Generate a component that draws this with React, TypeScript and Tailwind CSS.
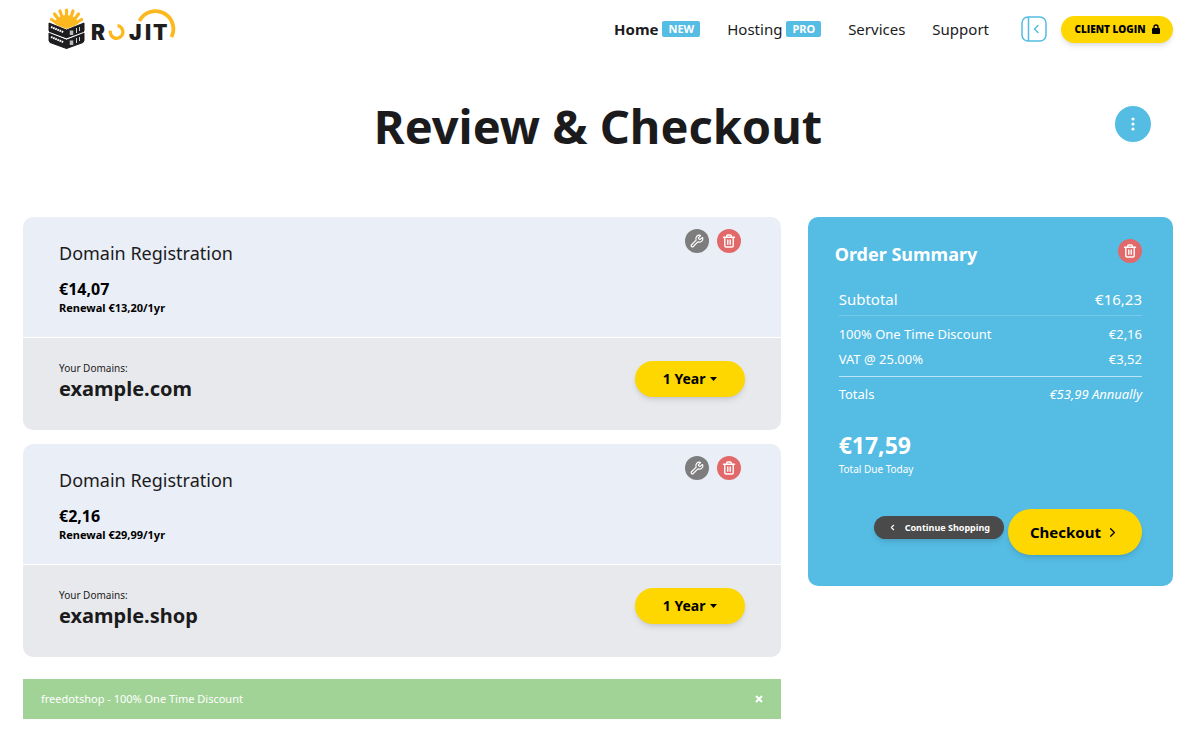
import { useState } from 'react';
import { ChevronLeft, ChevronRight, Wrench } from 'lucide-react';

type CartItem = {
	id: number;
	title: string;
	price: string;
	renewal: string;
	domain: string;
};

const navLinks = [
	{ label: 'Home', badge: 'NEW', active: true },
	{ label: 'Hosting', badge: 'PRO' },
	{ label: 'Services' },
	{ label: 'Support' },
];

const cartItems: CartItem[] = [
	{ id: 1, title: 'Domain Registration', price: '€14,07', renewal: 'Renewal €13,20/1yr', domain: 'example.com' },
	{ id: 2, title: 'Domain Registration', price: '€2,16', renewal: 'Renewal €29,99/1yr', domain: 'example.shop' },
];

function Logo() {
	return (
		<svg width="130" height="44" viewBox="0 0 130 44" role="img" aria-label="Rojit">
			{/* sun rays */}
			<g stroke="#fcb81e" strokeWidth="3.2" strokeLinecap="round">
				<path d="M18.5 17V4" />
				<path d="M16 17L12 5" />
				<path d="M21 17L25 5" />
				<path d="M14 18L6.5 8" />
				<path d="M23 18L30.5 8" />
				<path d="M12 19L3.5 13.5" />
				<path d="M25 19L33.5 13.5" />
			</g>
			<path d="M7 18a11.5 9 0 0 1 23 0l-11.5 5z" fill="#fcb81e" />
			{/* stacked servers */}
			<g fill="#1d1d1f" stroke="#1d1d1f" strokeWidth="1" strokeLinejoin="round">
				<path d="M1 17l17.5 7v8L2 26.5l-1-2z" />
				<path d="M36 17l-17.5 7v8L35 26.5l1-2z" />
				<path d="M1 27l17.5 7v8.5L2 36.5l-1-2z" />
				<path d="M36 27l-17.5 7v8.5L35 36.5l1-2z" />
			</g>
			<path d="M1.5 26.5l17 6.5 17-6.5" fill="none" stroke="#fff" strokeWidth="1" />
			<g stroke="#fff" strokeWidth="2" strokeDasharray="1.7 0.6" fill="none">
				<path d="M3 21l12.5 5.2" />
				<path d="M3 31l12.5 5.2" />
			</g>
			<g stroke="#fff" fill="none">
				<path d="M23.5 24.5v4.5M23.5 34.5v4.5" strokeWidth="3.5" opacity="0.7" />
				<path d="M28.5 22v5M28.5 32v5M31.5 21v4M31.5 31v4" strokeWidth="0.8" />
			</g>
			{/* word mark */}
			<g fill="#1d1d1f" fontFamily="Inter, sans-serif" fontWeight="900" fontSize="21">
				<text x="43" y="34">R</text>
				<text x="81" y="34">J</text>
				<text x="97" y="34">I</text>
				<text x="105" y="34">T</text>
			</g>
			<path d="M69.5 19.6a6.4 6.4 0 1 1-7.2 5" fill="none" stroke="#fcb81e" strokeWidth="3.4" />
			<path d="M91.5 15a17.5 17.5 0 1 1 32 16" fill="none" stroke="#fcb81e" strokeWidth="3.8" />
		</svg>
	);
}

function TrashIcon() {
	return (
		<svg width="14" height="14" viewBox="0 0 14 14" fill="none" stroke="currentColor" strokeWidth="1.4" strokeLinecap="round" strokeLinejoin="round">
			<path d="M1.5 3.3h11" />
			<path d="M4.7 3.2V2a1 1 0 0 1 1-1h2.6a1 1 0 0 1 1 1v1.2" />
			<path d="M2.8 3.5v8.2a1.3 1.3 0 0 0 1.3 1.3h5.8a1.3 1.3 0 0 0 1.3-1.3V3.5" />
			<path d="M5.8 6v4.2M8.2 6v4.2" />
		</svg>
	);
}

function DeleteButton({ label }: { label: string }) {
	return (
		<button aria-label={label} className="flex size-6 items-center justify-center rounded-full bg-[#e2696a] text-white">
			<TrashIcon />
		</button>
	);
}

function Header() {
	return (
		<header className="flex items-center justify-between pr-[17px] pl-12">
			<a href="#" className="pt-1.5">
				<Logo />
			</a>
			<div className="flex items-center pt-2">
				<nav className="flex items-center gap-[27px]">
					{navLinks.map((link) => (
						<a key={link.label} href="#" className={`flex items-center gap-1 text-[15px] ${link.active ? 'font-bold' : ''}`}>
							{link.label}
							{link.badge && (
								<span className="rounded-xs bg-[#55bce4] px-1.5 text-[11px] leading-4 font-bold text-white">{link.badge}</span>
							)}
						</a>
					))}
				</nav>
				<button aria-label="Toggle sidebar" className="ml-8 text-[#55bce4]">
					<svg width="26" height="26" viewBox="0 0 26 26" fill="none" stroke="currentColor" strokeWidth="1.5" strokeLinecap="round" strokeLinejoin="round">
						<rect x="1" y="1" width="24" height="24" rx="6" />
						<path d="M7.5 1.5v23" />
						<path d="M17 9.5L13.5 13l3.5 3.5" />
					</svg>
				</button>
				<a href="#" className="ml-3.5 flex h-[27px] w-28 items-center justify-center gap-1.5 rounded-full bg-[#ffd700] font-['Open_Sans',sans-serif] text-[10px] font-extrabold text-black shadow-md">
					CLIENT LOGIN
					<svg width="8" height="10" viewBox="0 0 8 10">
						<rect y="4" width="8" height="6" rx="1" fill="currentColor" />
						<path d="M2 4.5V3a2 2 0 0 1 4 0v1.5" fill="none" stroke="currentColor" strokeWidth="1.4" />
					</svg>
				</a>
			</div>
		</header>
	);
}

function CartCard({ item }: { item: CartItem }) {
	return (
		<article className="overflow-hidden rounded-[10px]">
			<div className="flex justify-between border-b border-white bg-[#eaeef6] pt-6 pr-10 pb-[22px] pl-9">
				<div>
					<h2 className="text-lg leading-6">{item.title}</h2>
					<p className="mt-3 text-base leading-6 font-bold text-black">{item.price}</p>
					<p className="text-[11px] leading-[14px] font-bold text-black">{item.renewal}</p>
				</div>
				<div className="-mt-3 flex gap-2">
					<button aria-label="Configure" className="flex size-6 items-center justify-center rounded-full bg-[#7d7d7d] text-white">
						<Wrench size={14} />
					</button>
					<DeleteButton label={`Remove ${item.domain}`} />
				</div>
			</div>
			<div className="flex items-start justify-between bg-[#e8e9ec] pt-[23px] pr-9 pb-[27px] pl-9">
				<div>
					<p className="text-[10px] leading-[14px]">Your Domains:</p>
					<p className="text-xl leading-7 font-bold">{item.domain}</p>
				</div>
				<button className="flex h-9 w-[110px] items-center justify-center gap-1 rounded-full bg-[#ffd700] text-sm font-bold text-black shadow-md">
					1 Year
					<svg width="7" height="4" viewBox="0 0 7 4" fill="currentColor">
						<path d="M0 0h7L3.5 4z" />
					</svg>
				</button>
			</div>
		</article>
	);
}

function OrderSummary() {
	return (
		<aside className="rounded-[10px] bg-[#55bce4] px-[27px] pt-[22px] pb-[31px] text-white">
			<div className="flex justify-between">
				<h2 className="pt-[3px] text-lg leading-6 font-bold">Order Summary</h2>
				<div className="pr-1">
					<DeleteButton label="Empty cart" />
				</div>
			</div>
			<div className="px-1">
				<table className="mt-[17px] w-full text-[13px] leading-5">
					<tbody>
						<tr className="border-b border-white/20 text-[15px]">
							<td className="py-1.5">Subtotal</td>
							<td className="py-1.5 text-right">€16,23</td>
						</tr>
						<tr>
							<td className="pt-2">100% One Time Discount</td>
							<td className="pt-2 text-right">€2,16</td>
						</tr>
						<tr className="border-b border-white/60">
							<td className="pt-[5px] pb-[7px]">VAT @ 25.00%</td>
							<td className="pt-[5px] pb-[7px] text-right">€3,52</td>
						</tr>
						<tr>
							<td className="pt-[7px]">Totals</td>
							<td className="pt-[7px] text-right italic">€53,99 Annually</td>
						</tr>
					</tbody>
				</table>
				<p className="mt-[25px] text-[23px] leading-8 font-bold">€17,59</p>
				<p className="text-[10px] leading-4">Total Due Today</p>
				<div className="mt-8 flex items-start justify-end gap-1">
					<button className="mt-[7px] flex h-[23px] items-center gap-2 rounded-full bg-[#4a4a4a] px-3.5 text-[9px] font-bold shadow-md">
						<ChevronLeft size={9} strokeWidth={3} />
						Continue Shopping
					</button>
					<button className="flex h-[46px] w-[134px] items-center justify-center gap-1 rounded-full bg-[#ffd700] text-[15px] font-bold text-black shadow-md">
						Checkout
						<ChevronRight size={15} />
					</button>
				</div>
			</div>
		</aside>
	);
}

export default function App() {
	const [showPromo, setShowPromo] = useState(true);

	return (
		<div className="bg-white font-['Noto_Sans','Open_Sans',sans-serif] text-[#1b1b1d]">
			<Header />
			<main className="pr-[17px] pb-5 pl-[23px]">
				<div className="relative mt-11 flex items-center justify-center">
					<h1 className="text-[47px] leading-[64px] font-bold">Review &amp; Checkout</h1>
					<button aria-label="More options" className="absolute top-3 right-[22px] flex size-9 items-center justify-center rounded-full bg-[#55bce4] text-white">
						<svg width="4" height="16" viewBox="0 0 4 16" fill="currentColor">
							<circle cx="2" cy="3" r="1.6" />
							<circle cx="2" cy="8" r="1.6" />
							<circle cx="2" cy="13" r="1.6" />
						</svg>
					</button>
				</div>
				<div className="mt-[59px] grid grid-cols-3 items-start gap-[27px]">
					<section className="col-span-2">
						<div className="flex flex-col gap-[14px]">
							{cartItems.map((item) => (
								<CartCard key={item.id} item={item} />
							))}
						</div>
						{showPromo && (
							<div className="mt-[22px] flex h-10 items-center justify-between bg-[#a1d396] px-[18px] text-[11px] text-white">
								<p>freedotshop - 100% One Time Discount</p>
								<button aria-label="Dismiss" onClick={() => setShowPromo(false)}>
									<svg width="8" height="8" viewBox="0 0 8 8" stroke="currentColor" strokeWidth="2">
										<path d="M1 1l6 6M7 1L1 7" />
									</svg>
								</button>
							</div>
						)}
					</section>
					<OrderSummary />
				</div>
			</main>
		</div>
	);
}
